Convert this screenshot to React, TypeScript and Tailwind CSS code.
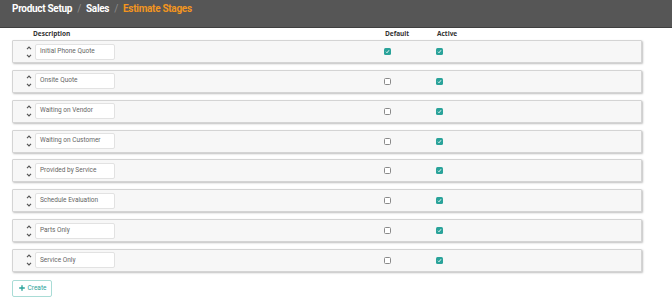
import { Plus } from 'lucide-react'

const stages = [
  { name: 'Initial Phone Quote', isDefault: true, active: true },
  { name: 'Onsite Quote', isDefault: false, active: true },
  { name: 'Waiting on Vendor', isDefault: false, active: true },
  { name: 'Waiting on Customer', isDefault: false, active: true },
  { name: 'Provided by Service', isDefault: false, active: true },
  { name: 'Schedule Evaluation', isDefault: false, active: true },
  { name: 'Parts Only', isDefault: false, active: true },
  { name: 'Service Only', isDefault: false, active: true },
]

function Check({ on }: { on: boolean }) {
  if (!on)
    return <div className="w-[7px] h-[7px] rounded-[1.5px] border border-[#8a8a8a] bg-white" />
  return (
    <div className="w-[7px] h-[7px] rounded-[1.5px] bg-[#2aa39a] flex items-center justify-center">
      <svg width="5" height="5" viewBox="0 0 10 10">
        <path d="M2 5.5 L4 7.5 L8 2.5" stroke="white" strokeWidth="1.8" fill="none" />
      </svg>
    </div>
  )
}

function Arrows() {
  return (
    <div className="flex flex-col items-center gap-[4px] w-[7px]">
      <svg width="6" height="4" viewBox="0 0 6 4">
        <path d="M1 3.2 L3 1.2 L5 3.2" stroke="#555" strokeWidth="1.2" fill="none" />
      </svg>
      <svg width="6" height="4" viewBox="0 0 6 4">
        <path d="M1 0.8 L3 2.8 L5 0.8" stroke="#555" strokeWidth="1.2" fill="none" />
      </svg>
    </div>
  )
}

export default function App() {
  return (
    <div className="w-[672px] h-[304px] bg-white overflow-hidden" style={{ fontFamily: 'Roboto, sans-serif' }}>
      <div className="h-[28px] bg-[#565656] border-b border-[#3f3f3f] pl-[12px] pt-[2px] flex items-start">
        <div className="text-[10px] font-bold tracking-[-0.3px] leading-[14px] text-white">
          Product Setup<span className="text-[#8c8c8c] font-normal mx-[5px]">/</span>Sales
          <span className="text-[#8c8c8c] font-normal mx-[5px]">/</span>
          <span className="text-[#f2951f]">Estimate Stages</span>
        </div>
      </div>

      <div
        className="flex h-[12px] items-center text-[6.5px] font-bold text-[#333]"
        style={{ fontFamily: '"Open Sans", sans-serif' }}
      >
        <div className="ml-[33px] w-[352px]">Description</div>
        <div className="w-[52px]">Default</div>
        <div>Active</div>
      </div>

      <div className="flex flex-col gap-[6.85px] pl-[12px] w-[642px]">
        {stages.map((s) => (
          <div
            key={s.name}
            className="h-[23px] flex items-center bg-[#f7f7f7] border border-[#d4d4d4] rounded-[1px] shadow-[1px_1px_2px_rgba(0,0,0,0.25)]"
          >
            <div className="ml-[12px] mr-[3px]">
              <Arrows />
            </div>
            <div className="w-[80px] h-[16px] bg-white border border-[#e2e2e2] rounded-[2px] flex items-center pl-[4px] text-[6.5px] text-[#666]">
              {s.name}
            </div>
            <div className="ml-[269px]">
              <Check on={s.isDefault} />
            </div>
            <div className="ml-[45px]">
              <Check on={s.active} />
            </div>
          </div>
        ))}
      </div>

      <div className="pl-[12px] pt-[8px]">
        <button className="w-[40px] h-[17px] border border-[#a9dcd6] rounded-[2px] bg-white flex items-center justify-center gap-[2px] text-[6.5px] text-[#2aa39a]">
          <Plus size={8} strokeWidth={4} className="text-[#2aa39a]" />
          Create
        </button>
      </div>
    </div>
  )
}
